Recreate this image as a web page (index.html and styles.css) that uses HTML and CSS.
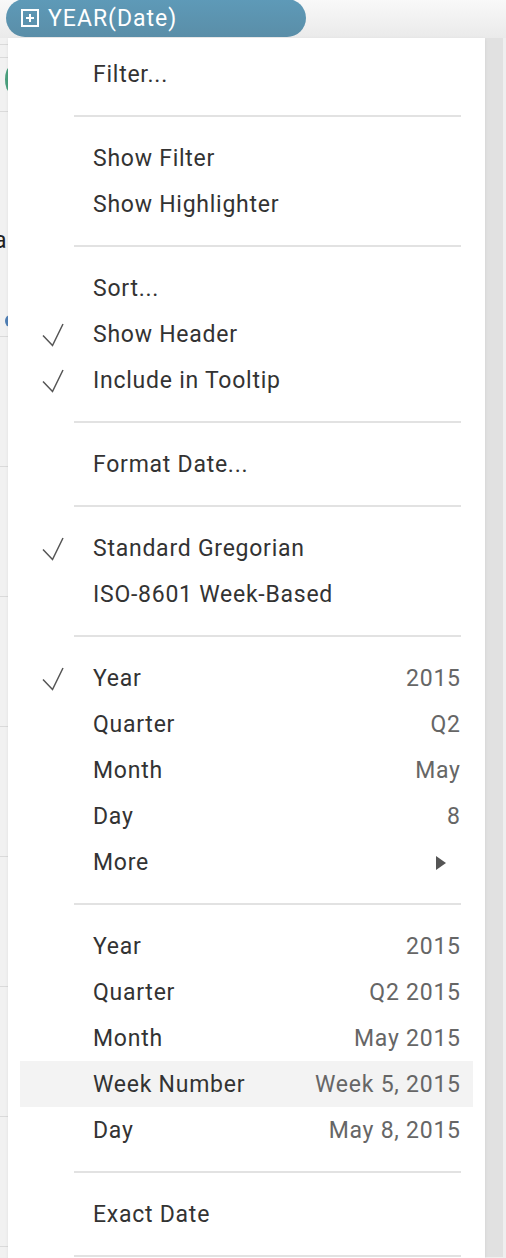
FILE: index.html
```html
<!DOCTYPE html>
<html>
<head>
<meta charset="utf-8">
<link rel="stylesheet" href="styles.css">
</head>
<body>
<div class="page">
  <header class="toolbar">
    <div class="pill">
      <svg class="pill-icon" viewBox="0 0 18 18" width="18" height="18"><rect x="1" y="1" width="16" height="16" fill="none" stroke="#fff" stroke-width="2"/><path d="M9 5v8M5 9h8" stroke="#fff" stroke-width="2"/></svg>
      <span>YEAR(Date)</span>
    </div>
  </header>
  <div class="body">
    <div class="sheet">
      <div class="r r1"></div>
      <div class="r r2"></div>
      <div class="r r3"><span class="dot green"></span></div>
      <div class="r r4"><span class="letter">a</span><span class="dot blue"></span></div>
      <div class="r"></div>
      <div class="r"></div>
      <div class="r"></div>
      <div class="r"></div>
      <div class="r"></div>
      <div class="r"></div>
      <div class="r"></div>
    </div>
    <div class="scroll"></div>
  </div>

  <div class="menu">
    <div class="item"><span class="chk"></span><span class="lbl">Filter...</span></div>
    <div class="sep"></div>
    <div class="item"><span class="chk"></span><span class="lbl">Show Filter</span></div>
    <div class="item"><span class="chk"></span><span class="lbl">Show Highlighter</span></div>
    <div class="sep"></div>
    <div class="item"><span class="chk"></span><span class="lbl">Sort...</span></div>
    <div class="item"><span class="chk"><svg viewBox="0 0 22 24" width="22" height="24"><path d="M1 12.5 L10.5 22.5 L21 1" fill="none" stroke="#555" stroke-width="1.5"/></svg></span><span class="lbl">Show Header</span></div>
    <div class="item"><span class="chk"><svg viewBox="0 0 22 24" width="22" height="24"><path d="M1 12.5 L10.5 22.5 L21 1" fill="none" stroke="#555" stroke-width="1.5"/></svg></span><span class="lbl">Include in Tooltip</span></div>
    <div class="sep"></div>
    <div class="item"><span class="chk"></span><span class="lbl">Format Date...</span></div>
    <div class="sep"></div>
    <div class="item"><span class="chk"><svg viewBox="0 0 22 24" width="22" height="24"><path d="M1 12.5 L10.5 22.5 L21 1" fill="none" stroke="#555" stroke-width="1.5"/></svg></span><span class="lbl">Standard Gregorian</span></div>
    <div class="item"><span class="chk"></span><span class="lbl">ISO-8601 Week-Based</span></div>
    <div class="sep"></div>
    <div class="item"><span class="chk"><svg viewBox="0 0 22 24" width="22" height="24"><path d="M1 12.5 L10.5 22.5 L21 1" fill="none" stroke="#555" stroke-width="1.5"/></svg></span><span class="lbl">Year</span><span class="val">2015</span></div>
    <div class="item"><span class="chk"></span><span class="lbl">Quarter</span><span class="val">Q2</span></div>
    <div class="item"><span class="chk"></span><span class="lbl">Month</span><span class="val">May</span></div>
    <div class="item"><span class="chk"></span><span class="lbl">Day</span><span class="val">8</span></div>
    <div class="item"><span class="chk"></span><span class="lbl">More</span><span class="arrow"></span></div>
    <div class="sep"></div>
    <div class="item"><span class="chk"></span><span class="lbl">Year</span><span class="val">2015</span></div>
    <div class="item"><span class="chk"></span><span class="lbl">Quarter</span><span class="val">Q2 2015</span></div>
    <div class="item"><span class="chk"></span><span class="lbl">Month</span><span class="val">May 2015</span></div>
    <div class="item hover"><span class="chk"></span><span class="lbl">Week Number</span><span class="val">Week 5, 2015</span></div>
    <div class="item"><span class="chk"></span><span class="lbl">Day</span><span class="val">May 8, 2015</span></div>
    <div class="sep"></div>
    <div class="item"><span class="chk"></span><span class="lbl">Exact Date</span></div>
    <div class="sep"></div>
  </div>
</div>
</body>
</html>
```

FILE: styles.css
```css
* { box-sizing: border-box; }
html, body { margin: 0; padding: 0; }
body {
  width: 506px;
  height: 1258px;
  overflow: hidden;
  font-family: Roboto, "Liberation Sans", sans-serif;
  background: #f0f0f0;
}
.page { position: relative; width: 506px; height: 1258px; }

.toolbar {
  height: 39px;
  background: linear-gradient(#f9f9f9, #eaeaea);
  padding-left: 6px;
}
.pill {
  width: 300px;
  height: 38px;
  margin-top: -1px;
  border-radius: 19px;
  background: linear-gradient(#5e9ab8, #5a8ea8);
  display: flex;
  align-items: center;
  padding-left: 15px;
  color: #fff;
  font-size: 23px;
  letter-spacing: 1px;
}
.pill-icon { margin-right: 9px; flex: none; }

.body { display: flex; height: 1219px; }
.sheet { flex: 1; background: #f1f1f1; }
.scroll { width: 21px; background: #e1e1e1; border-right: 3px solid #efefef; }
.r { height: 130px; border-bottom: 1px solid #dadada; position: relative; }
.r1 { height: 7px; }
.r2 { height: 13px; }
.r3 { height: 54px; }
.r4 { height: 225px; }
.dot { position: absolute; left: 5px; width: 10px; border-radius: 50%; }
.green { top: 9px; height: 25px; background: #4aa07e; }
.blue { top: 203px; height: 12px; background: #4f7fb5; }
.letter { position: absolute; left: -6px; top: 115px; font-size: 23px; color: #222; }

.menu {
  position: absolute;
  left: 8px;
  top: 39px;
  width: 477px;
  height: 1240px;
  background: #fff;
  padding-top: 13px;
  box-shadow: 0 1px 3px rgba(0,0,0,0.08);
}
.item {
  height: 46px;
  margin: 0 12px;
  display: flex;
  align-items: center;
  padding-right: 13px;
  padding-top: 1px;
  font-size: 23px;
  letter-spacing: 0.75px;
}
.item.hover { background: #f3f3f3; }
.chk {
  width: 73px;
  flex: none;
  padding-left: 22px;
  display: flex;
  align-items: center;
  height: 24px;
}
.lbl { color: #333; flex: 1; white-space: nowrap; }
.val { color: #666; white-space: nowrap; margin-right: -0.75px; }
.arrow {
  width: 0; height: 0;
  border-top: 7.5px solid transparent;
  border-bottom: 7.5px solid transparent;
  border-left: 10px solid #555;
  margin-right: 14px;
}
.sep {
  height: 2px;
  background: #e2e2e2;
  margin: 18px 24px 18px 66px;
}
```
